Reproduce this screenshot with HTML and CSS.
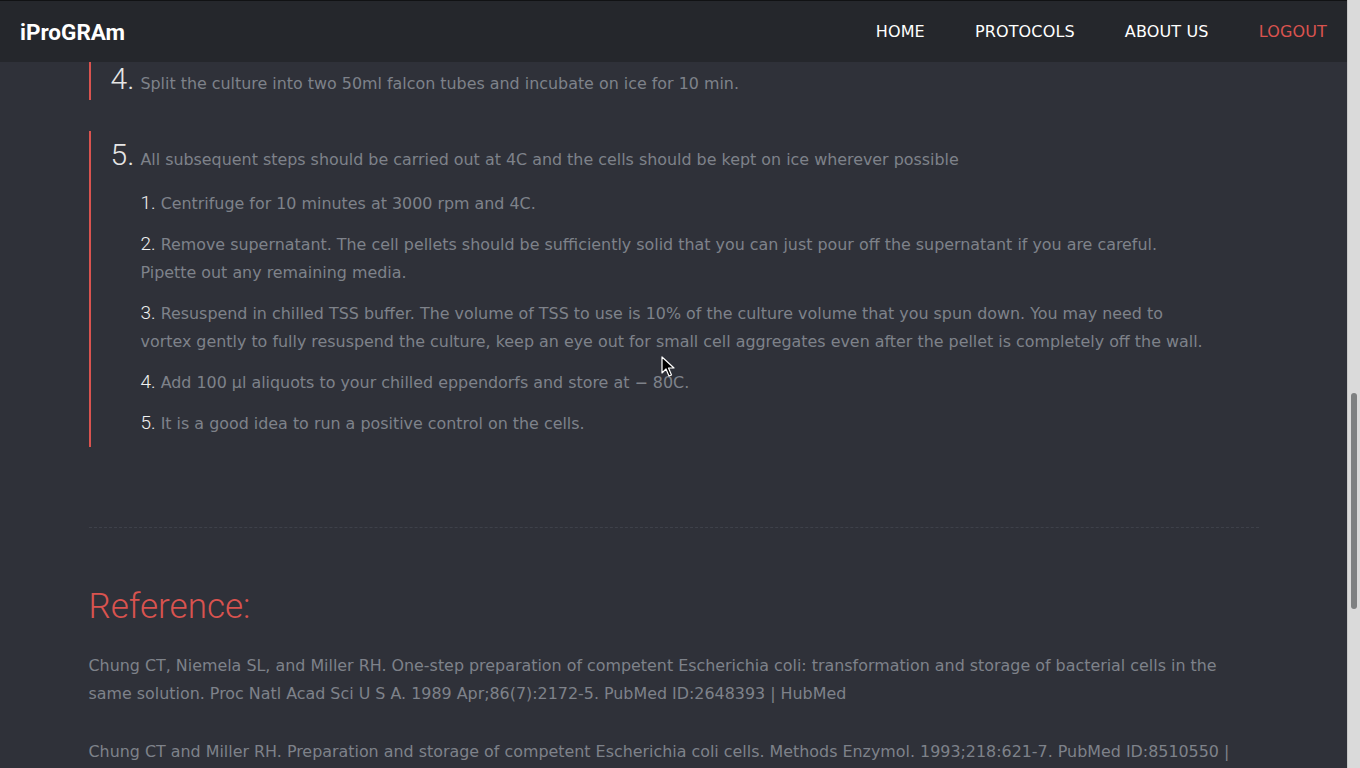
FILE: index.html
```html
<!DOCTYPE html>
<html lang="en">
<head>
<meta charset="utf-8">
<title>iProGRAm</title>
<link rel="stylesheet" href="styles.css">
</head>
<body>
<div class="page">
  <header class="navbar">
    <div class="brand">iProGRAm</div>
    <nav class="menu">
      <a class="menu-item" href="#">HOME</a>
      <a class="menu-item" href="#">PROTOCOLS</a>
      <a class="menu-item" href="#">ABOUT US</a>
      <a class="menu-item menu-item-logout" href="#">LOGOUT</a>
    </nav>
  </header>

  <main class="container">
    <section class="step step-cut">
      <p class="step-line"><span class="step-num">4.</span> Split the culture into two 50ml falcon tubes and incubate on ice for 10 min.</p>
    </section>

    <section class="step step-last">
      <p class="step-line"><span class="step-num">5.</span> All subsequent steps should be carried out at 4C and the cells should be kept on ice wherever possible</p>
      <div class="substeps">
        <p class="substep"><span class="sub-num">1.</span> Centrifuge for 10 minutes at 3000 rpm and 4C.</p>
        <p class="substep"><span class="sub-num">2.</span> Remove supernatant. The cell pellets should be sufficiently solid that you can just pour off the supernatant if you are careful. Pipette out any remaining media.</p>
        <p class="substep"><span class="sub-num">3.</span> Resuspend in chilled TSS buffer. The volume of TSS to use is 10% of the culture volume that you spun down. You may need to vortex gently to fully resuspend the culture, keep an eye out for small cell aggregates even after the pellet is completely off the wall.</p>
        <p class="substep"><span class="sub-num">4.</span> Add 100 μl aliquots to your chilled eppendorfs and store at − 80C.</p>
        <p class="substep"><span class="sub-num">5.</span> It is a good idea to run a positive control on the cells.</p>
      </div>
    </section>

    <hr class="divider">

    <h2 class="ref-title">Reference:</h2>
    <p class="ref">Chung CT, Niemela SL, and Miller RH. One-step preparation of competent Escherichia coli: transformation and storage of bacterial cells in the same solution. Proc Natl Acad Sci U S A. 1989 Apr;86(7):2172-5. PubMed ID:2648393 | HubMed</p>
    <p class="ref">Chung CT and Miller RH. Preparation and storage of competent Escherichia coli cells. Methods Enzymol. 1993;218:621-7. PubMed ID:8510550 | HubMed</p>
  </main>

  <svg class="cursor" width="14" height="22" viewBox="0 0 14 22" aria-hidden="true">
    <path d="M1 1 L1 17 L5 13 L8 20 L10.5 19 L7.5 12 L13 12 Z" fill="#000" stroke="#fff" stroke-width="1.2" stroke-linejoin="round"/>
  </svg>
</div>
<div class="scrollbar"><div class="scroll-thumb"></div></div>
</body>
</html>
```

FILE: styles.css
```css
html, body {
  margin: 0;
  padding: 0;
  height: 100%;
}

body {
  display: flex;
  background: #2f3139;
  font-family: "DejaVu Sans", Verdana, sans-serif;
  font-size: 15.9px;
  line-height: 28px;
  color: #7e828a;
  overflow: hidden;
}

.page {
  flex: 1;
  height: 100vh;
  overflow: hidden;
  position: relative;
}

.navbar {
  height: 61px;
  border-top: 1px solid #111214;
  background: #25272c;
  display: flex;
  align-items: center;
  justify-content: space-between;
  padding: 0 20px;
}

.brand {
  font-family: "Roboto", "Liberation Sans", sans-serif;
  font-weight: 700;
  font-size: 22.5px;
  color: #ffffff;
  margin-top: 1px;
}

.menu {
  display: flex;
  gap: 50px;
  margin-top: 1px;
}

.menu-item {
  font-size: 16px;
  letter-spacing: 0.15px;
  color: #ffffff;
  text-decoration: none;
}

.menu-item-logout {
  color: #d9534f;
}

.container {
  width: 1170px;
  margin: 0 auto;
}

.step {
  border-left: 2px solid #d9534f;
  padding-left: 20px;
  padding-right: 48px;
}

.step-cut {
  padding-top: 7px;
  padding-bottom: 2px;
}

.step-last {
  margin-top: 31px;
  padding-top: 14px;
  padding-bottom: 9px;
}

.step p {
  margin: 0;
}

.step-num {
  font-family: "Roboto", "Open Sans", sans-serif;
  font-weight: 300;
  font-size: 30px;
  line-height: 20px;
  color: #e6e6e6;
  margin-right: 1px;
}

.substeps {
  padding-left: 30px;
  margin-top: 16px;
  display: flex;
  flex-direction: column;
  gap: 13px;
}

.sub-num {
  font-family: "Roboto", "Open Sans", sans-serif;
  font-weight: 300;
  font-size: 19px;
  line-height: 20px;
  color: #f2f2f2;
}

.divider {
  margin: 80px 0 0;
  border: 0;
  border-top: 1px dashed #3e414a;
  height: 0;
}

.ref-title {
  margin: 57px 0 0;
  font-family: "Roboto", "Open Sans", sans-serif;
  font-weight: 300;
  font-size: 35px;
  line-height: 44px;
  color: #d9534f;
}

.ref {
  margin: 23px 0 0;
}

.ref + .ref {
  margin-top: 30px;
}

.cursor {
  position: absolute;
  left: 661px;
  top: 356px;
}

.scrollbar {
  width: 12px;
  height: 100vh;
  background: #dadada;
  border-left: 1px solid #c8c8c8;
  position: relative;
}

.scroll-thumb {
  position: absolute;
  left: 3px;
  width: 6px;
  top: 393px;
  height: 216px;
  border-radius: 3px;
  background: #7e8081;
}
```
